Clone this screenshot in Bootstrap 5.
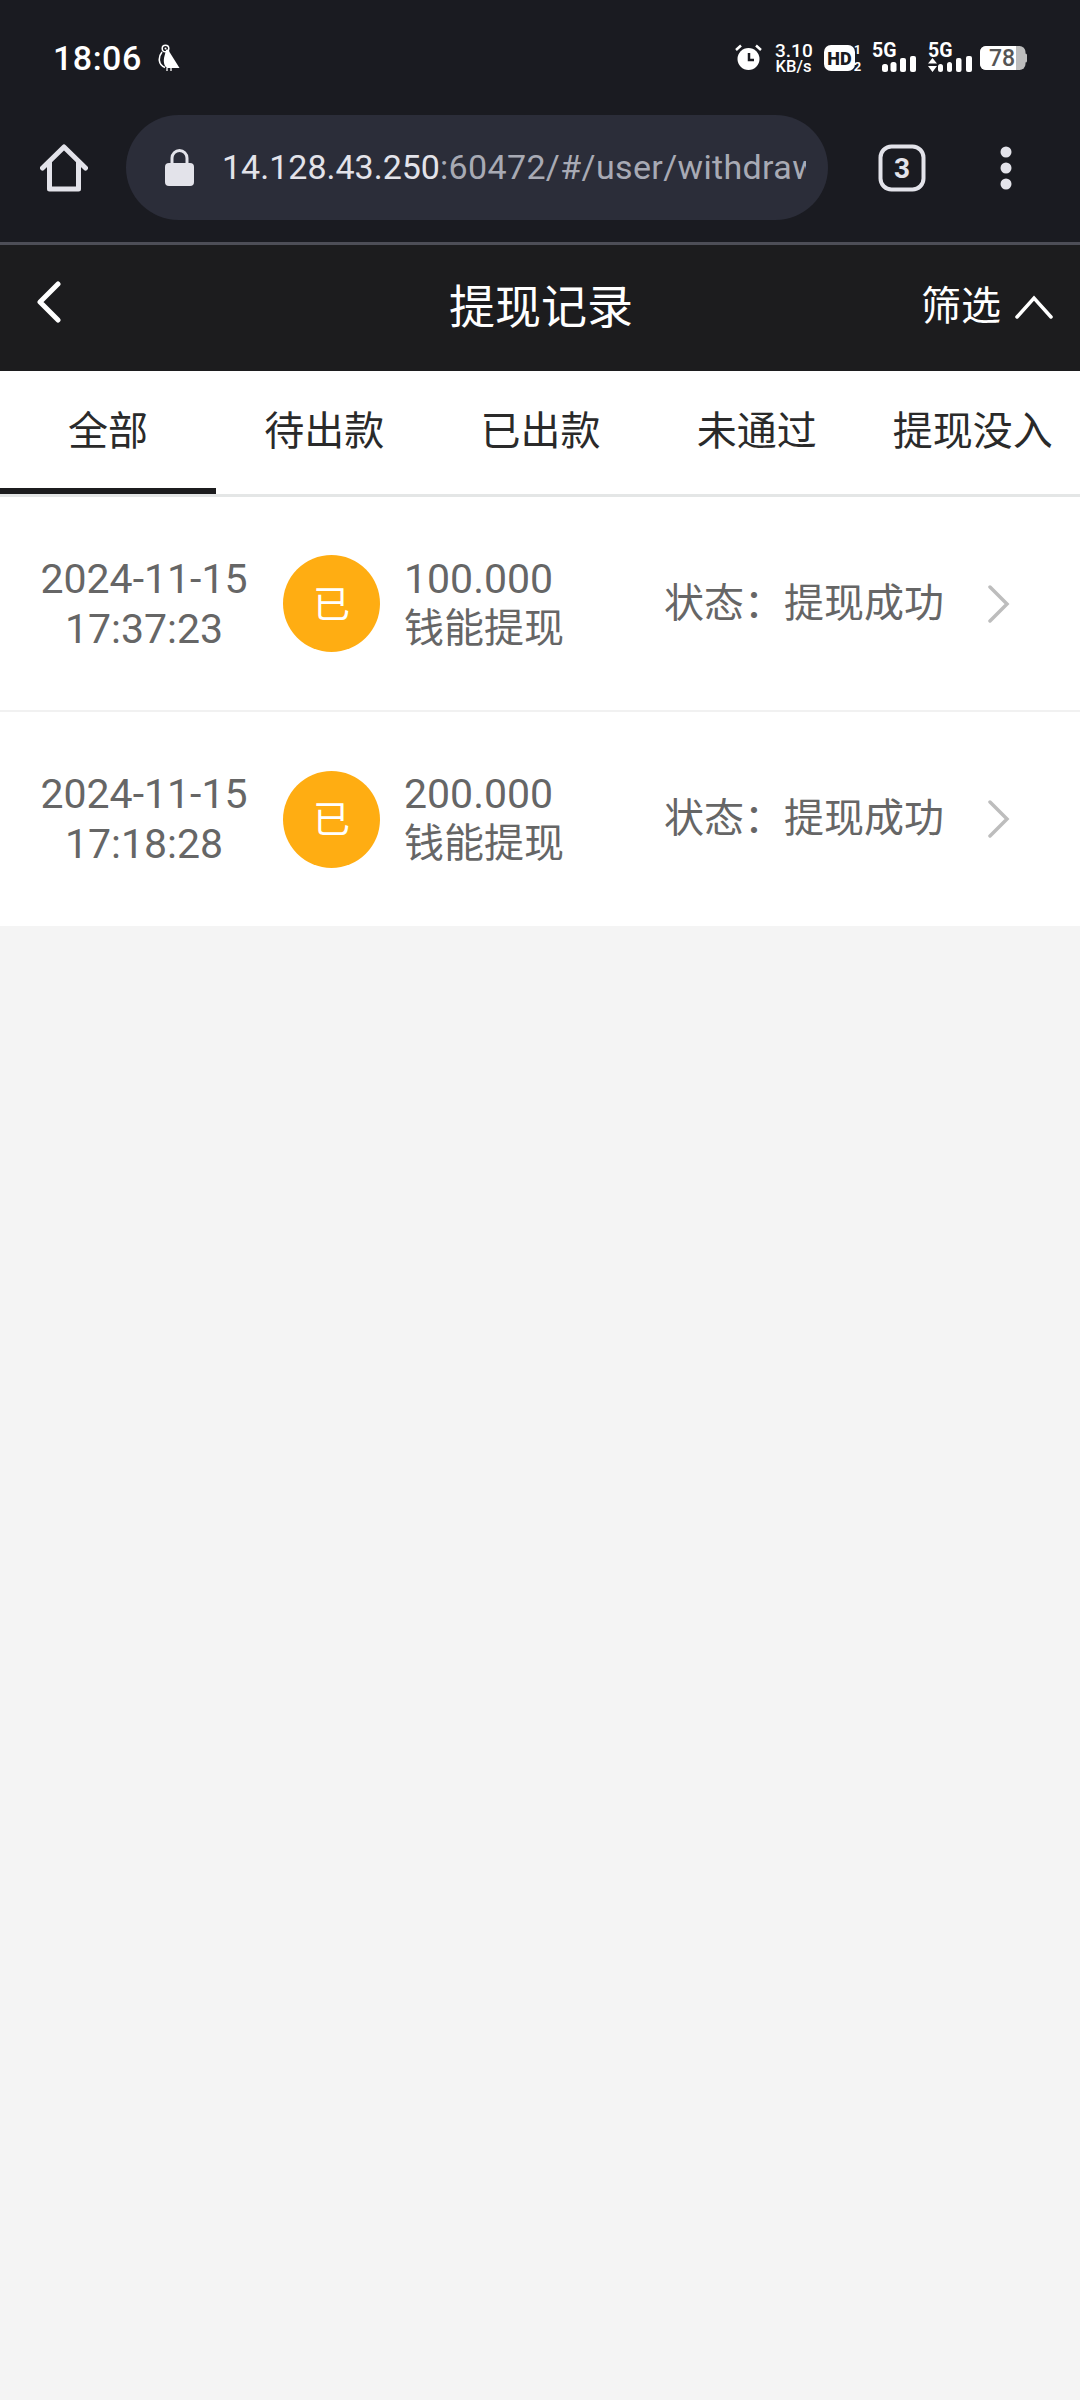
<!DOCTYPE html>
<html lang="zh">
<head>
<meta charset="utf-8">
<title>提现记录</title>
<link href="https://cdn.jsdelivr.net/npm/bootstrap@5.3.0/dist/css/bootstrap.min.css" rel="stylesheet">
<style>
html,body{height:100%}
body{background:#f4f4f4;font-family:Roboto,"Noto Sans CJK SC",sans-serif;width:1080px;min-height:2400px}
.phone-chrome{background:#1a1b21;height:245px;border-bottom:3px solid #4d4e57}
.status-row{height:115px;padding:0 53px;color:#fff}
.clock{font-size:34px;font-weight:500;letter-spacing:.5px;line-height:1}
.bird{margin-left:16px}
.speed{width:37px;margin:0 12px 0 13px;font-weight:500;text-align:center;white-space:nowrap}
.speed-top{font-size:19px;line-height:19px;margin-bottom:-2px}
.speed-unit{font-size:16.500px;line-height:17px}
.gap-hd{margin-right:10px}
.gap-sig{margin-right:12px}
.gap-sig2{margin-right:8px}
.url-row{height:105px;padding-left:40px}
.url-pill{background:#2b2d39;width:702px;height:105px;border-radius:53px;margin-left:38px;padding-left:39px;overflow:hidden;white-space:nowrap;color:#e3e3ea;font-size:34px;flex:none}
.url-pill .dim{color:#a8aab4;letter-spacing:.35px}
.url-text{width:584px;overflow:hidden;margin-left:28px;flex:none}
.tab-count{margin-left:50px}
.more-dots{margin-left:73px}
.title-bar{background:#1c1c1e;height:126px;color:#fff;padding:0 27px 0 36px;position:relative}
.back-icon{margin-bottom:12px}
.page-title{font-size:46px;position:absolute;left:0;right:0;top:35px;text-align:center;line-height:54px;padding-left:2px}
.filter{font-size:40px;line-height:1}
.filter-box{gap:14px;margin-bottom:3px}
.tab-bar{background:#fff;height:126px;border-bottom:3px solid #e4e6e6}
.tab-item{width:216.2px;flex:none;text-align:center;font-size:40px;color:#2a2a2a;line-height:1;padding-top:41px;position:relative;white-space:nowrap}
.tab-item.on::after{content:"";position:absolute;left:0;right:0;bottom:0;height:6px;background:#1c1c1e}
.rec{background:#fff;height:215px;border-bottom:2px solid #f1f1f1;color:#666;line-height:50px}
.rec:last-child{border-bottom:0;height:214px}
.when{width:288px;flex:none;text-align:center;font-size:41px}
.dot{width:97px;height:97px;flex:none;border-radius:50%;background:#ffad12;color:#fff;font-size:37px;margin-left:-5px;padding-top:4px}
.amt{width:260px;flex:none;margin-left:24px;font-size:40px}
.amt .num{font-size:41px}
.state{width:323px;flex:none;font-size:40px;white-space:nowrap}
</style>
</head>
<body>
<header class="phone-chrome">
  <div class="status-row d-flex align-items-center justify-content-between">
    <div class="d-flex align-items-center">
      <span class="clock">18:06</span>
      <svg class="bird" width="22" height="27" viewBox="0 0 22 27"><path fill="#fff" d="M8 6c2-1 3 0 3.500 2L21.500 24H9C6 22 5 17 6.500 12z"/><circle cx="7.500" cy="4.500" r="3.300" fill="none" stroke="#fff" stroke-width="1.500"/><circle cx="7.500" cy="4.500" r="1" fill="#fff"/><path d="M4 8C0 13 0 21 7 23.500" fill="none" stroke="#fff" stroke-width="1.600"/><path d="M9 24v3M13 24v3" stroke="#fff" stroke-width="1.300"/></svg>
    </div>
    <div class="d-flex align-items-center text-white">
      <svg width="27" height="27" viewBox="0 0 27 27"><circle cx="13.500" cy="15" r="11" fill="#fff"/><path d="M14 9v7h5" stroke="#1a1b21" stroke-width="2.500" fill="none"/><path d="M1 6l5-4.500M26 6l-5-4.500" stroke="#fff" stroke-width="2.500"/></svg>
      <div class="speed"><div class="speed-top">3.10</div><div class="speed-unit">KB/s</div></div>
      <svg class="gap-hd" width="38" height="40" viewBox="0 -6 38 40"><rect y="1" width="31" height="26" rx="7" fill="#fff"/><text x="15.500" y="20.500" font-family="Roboto" font-weight="900" font-size="18" text-anchor="middle" fill="#1a1b21">HD</text><text x="33.500" y="10" font-family="Roboto" font-weight="700" font-size="12" text-anchor="middle" fill="#fff">1</text><text x="33.500" y="27" font-family="Roboto" font-weight="700" font-size="13" text-anchor="middle" fill="#fff">2</text></svg>
      <svg class="gap-sig" width="44" height="40" viewBox="0 -5 44 40"><text x="0" y="14" font-family="Roboto" font-weight="700" font-size="19.500" fill="#fff">5G</text><rect x="10" y="21" width="6" height="8" rx="2.500" fill="#fff"/><rect x="18.500" y="19" width="6" height="10" rx="2.500" fill="#fff"/><rect x="28" y="15" width="6" height="14" rx="2" fill="#fff"/><rect x="38" y="13" width="6" height="16" rx="2" fill="#fff"/></svg>
      <svg class="gap-sig2" width="44" height="40" viewBox="0 -5 44 40"><text x="0" y="14" font-family="Roboto" font-weight="700" font-size="19.500" fill="#fff">5G</text><path d="M0 20.500l4.500-5.500 4.500 5.500zM0 23l4.500 6 4.500-6z" fill="#fff"/><rect x="10" y="21" width="5" height="8" rx="2.500" fill="#fff"/><rect x="19" y="19" width="5" height="10" rx="2.500" fill="#fff"/><rect x="28" y="15" width="5.500" height="14" rx="2" fill="#fff"/><rect x="38" y="13" width="6" height="16" rx="2" fill="#fff"/></svg>
      <svg width="47" height="32" viewBox="0 -4 47 32"><rect width="45.500" height="24" rx="6" fill="#bdbdbd"/><path d="M6 0h30v24H6a6 6 0 0 1-6-6V6a6 6 0 0 1 6-6z" fill="#fff"/><rect x="44" y="7.500" width="3" height="9" rx="1.500" fill="#bdbdbd"/><text x="22" y="20" font-family="Roboto" font-weight="500" font-size="23" text-anchor="middle" fill="#555">78</text></svg>
    </div>
  </div>
  <div class="url-row d-flex align-items-center">
    <svg width="48" height="48" viewBox="0 0 48 48"><path d="M2.500 24 24 3l21.500 21M9.500 18v27h29V18" fill="none" stroke="#e3e3ea" stroke-width="5" stroke-linecap="round" stroke-linejoin="round"/></svg>
    <div class="url-pill d-flex align-items-center">
      <svg width="29" height="37" viewBox="0 0 29 37"><path d="M7 15V9a7.500 7.500 0 0 1 15 0v6" fill="none" stroke="#e3e3ea" stroke-width="3"/><rect y="14" width="29" height="23" rx="4" fill="#e3e3ea"/></svg>
      <div class="url-text">14.128.43.250<span class="dim">:60472/#/user/withdraw</span></div>
    </div>
    <svg class="tab-count" width="48" height="48" viewBox="0 0 48 48"><rect x="2.500" y="2.500" width="43" height="43" rx="11" fill="none" stroke="#e3e3ea" stroke-width="4"/><text x="24" y="34" font-family="Roboto" font-weight="700" font-size="28" text-anchor="middle" fill="#e3e3ea">3</text></svg>
    <svg class="more-dots" width="14" height="44" viewBox="0 0 14 44"><circle cx="7" cy="6" r="5.500" fill="#e3e3ea"/><circle cx="7" cy="22" r="5.500" fill="#e3e3ea"/><circle cx="7" cy="38" r="5.500" fill="#e3e3ea"/></svg>
  </div>
</header>
<div class="title-bar d-flex align-items-center justify-content-between">
  <svg class="back-icon" width="26" height="42" viewBox="0 0 26 42"><path d="M22 3 4 21l18 18" fill="none" stroke="#fff" stroke-width="5" stroke-linecap="round" stroke-linejoin="round"/></svg>
  <div class="page-title">提现记录</div>
  <div class="filter-box d-flex align-items-center position-relative">
    <span class="filter">筛选</span>
    <svg width="38" height="26" viewBox="0 0 38 26"><path d="M2 23 19 4l17 19" fill="none" stroke="#fff" stroke-width="3.500" stroke-linecap="round"/></svg>
  </div>
</div>
<nav class="tab-bar d-flex">
  <div class="tab-item on">全部</div>
  <div class="tab-item">待出款</div>
  <div class="tab-item">已出款</div>
  <div class="tab-item">未通过</div>
  <div class="tab-item">提现没入</div>
</nav>
<main>
  <div class="rec d-flex align-items-center">
    <div class="when">2024-11-15<br>17:37:23</div>
    <div class="dot d-flex align-items-center justify-content-center">已</div>
    <div class="amt"><div class="num">100.000</div><div>钱能提现</div></div>
    <div class="state">状态：提现成功</div>
    <svg width="24" height="38" viewBox="0 0 24 38"><path d="M3 2l17 17L3 36" fill="none" stroke="#bdbdbd" stroke-width="3.500" stroke-linecap="round"/></svg>
  </div>
  <div class="rec d-flex align-items-center">
    <div class="when">2024-11-15<br>17:18:28</div>
    <div class="dot d-flex align-items-center justify-content-center">已</div>
    <div class="amt"><div class="num">200.000</div><div>钱能提现</div></div>
    <div class="state">状态：提现成功</div>
    <svg width="24" height="38" viewBox="0 0 24 38"><path d="M3 2l17 17L3 36" fill="none" stroke="#bdbdbd" stroke-width="3.500" stroke-linecap="round"/></svg>
  </div>
</main>
<script src="https://cdn.jsdelivr.net/npm/bootstrap@5.3.0/dist/js/bootstrap.bundle.min.js"></script>
</body>
</html>
